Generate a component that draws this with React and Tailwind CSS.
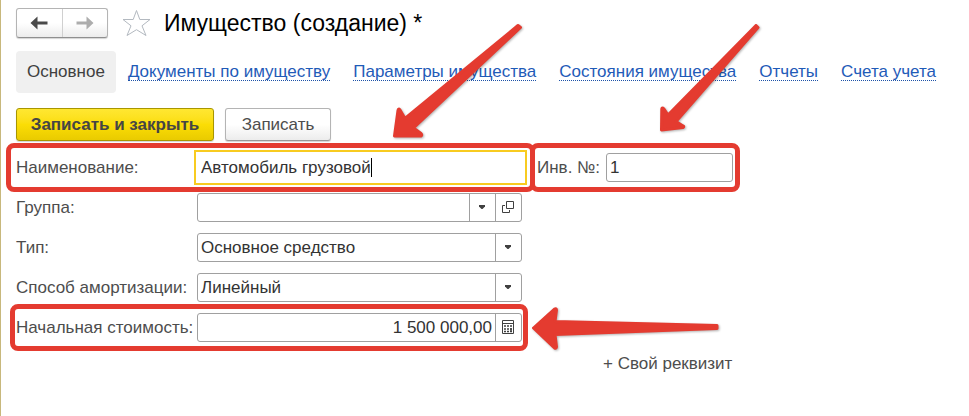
import { useState } from "react";

const links = [
  "Документы по имуществу",
  "Параметры имущества",
  "Состояния имущества",
  "Отчеты",
  "Счета учета",
];

const arrows = [
  "M518 25.500 L405 118.500 L400 110 Q398.300 108 398 110.500 L394.500 136 L421 136 Q422.500 135 421 133.500 L413.500 128 L520.500 27.500 Z",
  "M756 25.500 L668 115 L664 109 Q662 107 661.800 109 L661.500 130 L683 127.500 Q684.500 126.500 683 126 L676 121.500 L758 27.500 Z",
  "M533.500 328 L554.500 309 Q556.500 308 556.500 310 L555 321.500 L717 325.500 L717 328.500 L555 334.500 L556.500 347 Q556 349 554.500 348 Z",
];

function Caret() {
  return (
    <svg width="7" height="5" viewBox="0 0 7 5" fill="#404040">
      <path d="M0 0h6v1.500L3.500 4h-1L0 1.500z" />
    </svg>
  );
}

function Highlight({ className }) {
  return (
    <span className={"absolute rounded-lg border-[5px] border-[#e43b30] pointer-events-none " + className}></span>
  );
}

function SelectField({ id, label, options }) {
  return (
    <div className="flex items-center">
      <label htmlFor={id} className="w-[181px] shrink-0">{label}</label>
      <div className="relative w-[325px]">
        <select id={id} className="block w-full h-[29px] appearance-none rounded-[3px] border border-[#a0a0a0] bg-white pl-[3px] pr-7 text-[#333333]">
          {options.map((item) => (
            <option key={item}>{item}</option>
          ))}
        </select>
        <span className="absolute inset-y-px right-px flex w-[26px] items-center justify-center border-l border-[#a0a0a0] pointer-events-none">
          <Caret />
        </span>
      </div>
    </div>
  );
}

export default function App() {
  const [name, setName] = useState("Автомобиль грузовой");
  const [number, setNumber] = useState("1");
  const [group, setGroup] = useState("");
  const [cost, setCost] = useState("1 500 000,00");

  return (
    <main className="relative min-h-screen overflow-hidden border-l border-[#c8b87c] bg-white pl-[15px] pt-2 font-['Liberation_Sans',Arial,sans-serif] text-[17px] leading-5 text-[#4d4d4d]">
      <header className="flex h-[30px] items-center">
        <div className="flex h-[30px] w-[92px] rounded-[3px] border border-[#b4b4b4] border-b-[#8f8f8f] bg-linear-to-b from-white from-50% to-[#ececec] shadow-[0_1px_1px_#d4d4d4]">
          <button type="button" aria-label="Назад" className="flex flex-1 items-center justify-center border-r border-[#d0d0d0]">
            <svg width="18" height="14" viewBox="0 0 18 14" fill="#4a4a4a">
              <path d="M.5 7 7.500.5V5.500H17.500V8.500H7.500V13.500z" />
            </svg>
          </button>
          <button type="button" aria-label="Вперед" className="flex flex-1 items-center justify-center">
            <svg width="18" height="14" viewBox="0 0 18 14" fill="#adadad">
              <path d="M17.500 7 10.500.5V5.500H.5V8.500H10.500V13.500z" />
            </svg>
          </button>
        </div>
        <button type="button" aria-label="В избранное" className="ml-3.5">
          <svg width="29" height="28" viewBox="0 0 29 28" fill="none" stroke="#b3b9c0" strokeWidth="1">
            <path d="M14.500 1.500 17.800 10.500H28L20 16.800 24 26.500 14.500 20.700 5 26.500 9 16.800 1 10.500H11.200z" />
          </svg>
        </button>
        <h1 className="ml-[13px] text-[23px] leading-7 text-black">Имущество (создание) *</h1>
      </header>

      <nav className="mt-[13px] flex h-[42px] items-center gap-[23px] whitespace-nowrap">
        <a href="#main" className="-mr-[11px] flex h-[42px] items-center rounded bg-[#f0f0f0] px-[11px] text-[#404040]">Основное</a>
        {links.map((item) => (
          <a key={item} href="#section" className="border-b border-dotted border-[#1d52a8] leading-4 text-[#1f5bb8]">{item}</a>
        ))}
      </nav>

      <div className="mt-[15px] flex gap-[11px]">
        <button type="button" className="h-[33px] w-[198px] rounded-[3px] border border-[#a89600] bg-linear-to-b from-[#ffe731] via-[#fbdd05] to-[#e9cb00] font-bold text-[#454545] shadow-[0_1px_1px_#d4d4d4]">
          Записать и закрыть
        </button>
        <button type="button" className="h-[33px] w-[106px] rounded-[3px] border border-[#b4b4b4] border-b-[#999999] bg-linear-to-b from-white from-50% to-[#ececec] shadow-[0_1px_1px_#d4d4d4]">
          Записать
        </button>
      </div>

      <form className="mt-3 flex flex-col gap-[11px]">
        <div className="flex items-center">
          <div className="relative flex items-center">
            <label htmlFor="name" className="w-[181px] shrink-0">Наименование:</label>
            <input id="name" value={name} onChange={(e) => setName(e.target.value)} className="h-[29px] w-[327px] bg-white px-1 text-[#333333] outline-2 outline-offset-1 outline-[#f8cb20]" />
            <span className="absolute left-[355px] h-[19px] w-px bg-black"></span>
            <Highlight className="-inset-y-[10px] -left-[10px] -right-[11px]" />
          </div>
          <div className="relative ml-[13px] flex items-center gap-1.5">
            <label htmlFor="number" className="w-[63px] whitespace-nowrap">Инв. №:</label>
            <input id="number" value={number} onChange={(e) => setNumber(e.target.value)} className="h-[29px] w-[127px] rounded-[3px] border border-[#a0a0a0] bg-white px-[3px] text-[#333333]" />
            <Highlight className="-inset-y-[10px] -left-[7px] -right-[7px]" />
          </div>
        </div>

        <div className="flex items-center">
          <label htmlFor="group" className="w-[181px] shrink-0">Группа:</label>
          <div className="flex h-[29px] w-[325px] rounded-[3px] border border-[#a0a0a0] bg-white">
            <input id="group" value={group} onChange={(e) => setGroup(e.target.value)} className="min-w-0 flex-1 px-[3px] text-[#333333]" />
            <button type="button" aria-label="Выбрать" className="flex w-[26px] items-center justify-center border-l border-[#a0a0a0]">
              <Caret />
            </button>
            <button type="button" aria-label="Открыть" className="flex w-[26px] items-center justify-center border-l border-[#a0a0a0]">
              <svg width="13" height="13" viewBox="0 0 13 13" fill="none" stroke="#404040">
                <path d="M4.500.5h7v7h-7zM3 4.500H.5v7h7V9" />
              </svg>
            </button>
          </div>
        </div>

        <SelectField id="type" label="Тип:" options={["Основное средство"]} />
        <SelectField id="method" label="Способ амортизации:" options={["Линейный"]} />

        <div className="flex">
          <div className="relative flex items-center">
            <label htmlFor="cost" className="w-[181px] shrink-0 whitespace-nowrap">Начальная стоимость:</label>
            <div className="flex h-[29px] w-[325px] rounded-[3px] border border-[#a0a0a0] bg-white">
              <input id="cost" value={cost} onChange={(e) => setCost(e.target.value)} className="min-w-0 flex-1 px-[3px] text-right text-[#333333]" />
              <button type="button" aria-label="Калькулятор" className="flex w-[26px] items-center justify-center border-l border-[#a0a0a0]">
                <svg width="13" height="15" viewBox="0 0 13 15" fill="none" stroke="#404040">
                  <path d="M.5.500h11v13H.5zM0 3.500h12" />
                  <path d="M2 6h2M5 6h2M8 6h2M2 9h2M5 9h2M8 9h2M2 11.500h2M5 11.500h2M8 11.500h2M9 8v4" strokeWidth="1.500" />
                </svg>
              </button>
            </div>
            <Highlight className="-top-[9px] -bottom-[9px] -left-[6px] -right-[6px]" />
          </div>
        </div>
      </form>

      <button type="button" className="ml-[587px] mt-3 block whitespace-nowrap">+ Свой реквизит</button>

      <svg width="969" height="416" viewBox="0 0 969 416" className="absolute top-0 -left-px max-w-none pointer-events-none drop-shadow-[1px_1px_1px_rgba(0,0,0,0.3)]" fill="#e43b30" stroke="#e43b30" strokeWidth="3" strokeLinejoin="round">
        {arrows.map((d) => (
          <path key={d} d={d} />
        ))}
      </svg>
    </main>
  );
}
